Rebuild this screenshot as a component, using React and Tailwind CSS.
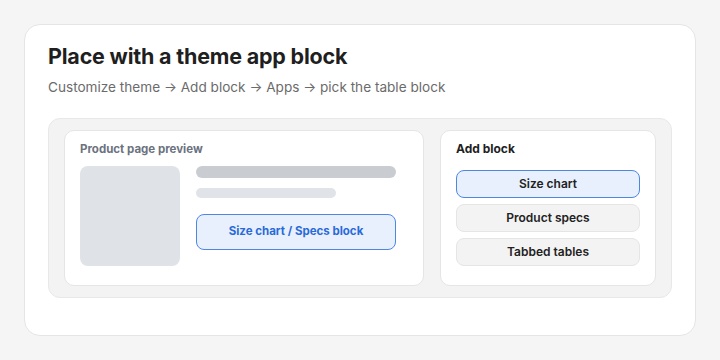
import React from 'react';

const blocks = ['Size chart', 'Product specs', 'Tabbed tables'];

function App() {
    return (
        <div className="w-[720px] h-[360px] bg-[#f5f5f5] p-6" style={{ fontFamily: 'Inter, "Noto Sans", sans-serif' }}>
            <div className="h-[312px] bg-white border border-[#e5e5e5] rounded-2xl px-[23px] pt-[16px]">
                <h1 className="text-[21.5px] leading-[30px] font-bold text-[#1f1f1f] tracking-[-0.2px]">
                    Place with a theme app block
                </h1>
                <p className="mt-[6px] text-[13.6px] leading-[20px] text-[#6b6b6b]">
                    Customize theme → Add block → Apps → pick the table block
                </p>

                <div className="mt-[21px] flex gap-4 bg-[#f3f3f3] border border-[#e8e8e8] rounded-xl px-[15px] py-[11px]">
                    {/* Product preview */}
                    <div className="w-[360px] h-[156px] bg-white border border-[#e5e5e5] rounded-[10px] px-[15px] pt-[10px]">
                        <div className="text-[11.5px] leading-[16px] font-bold text-[#6b7280]">Product page preview</div>
                        <div className="mt-[9px] flex gap-4">
                            <div className="w-[100px] h-[100px] rounded-lg bg-[#dfe2e6]" />
                            <div className="flex-1">
                                <div className="w-[200px] h-3 rounded-full bg-[#c9ccd1]" />
                                <div className="mt-[10px] w-[140px] h-[10px] rounded-full bg-[#e0e3e7]" />
                                <div className="mt-4 w-[200px] h-9 rounded-lg border border-[#4d86e3] bg-[#e8f0fd] flex items-center justify-center text-[11.5px] font-bold text-[#2a6ad8]">
                                    Size chart / Specs block
                                </div>
                            </div>
                        </div>
                    </div>

                    {/* Add block */}
                    <div className="w-[216px] h-[156px] bg-white border border-[#e5e5e5] rounded-[10px] px-[15px] pt-[10px]">
                        <div className="text-[12px] leading-[16px] font-bold text-[#1f1f1f]">Add block</div>
                        <div className="mt-[13px] flex flex-col gap-[6px]">
                            {blocks.map((b, i) => (
                                <div
                                    key={b}
                                    className={
                                        i === 0
                                            ? 'h-7 rounded-lg border border-[#4d86e3] bg-[#e8f0fd] flex items-center justify-center text-[12px] font-semibold text-[#222]'
                                            : 'h-7 rounded-lg border border-[#e5e5e5] bg-[#f3f3f3] flex items-center justify-center text-[12px] font-semibold text-[#222]'
                                    }
                                >
                                    {b}
                                </div>
                            ))}
                        </div>
                    </div>
                </div>
            </div>
        </div>
    );
}

export default App;
